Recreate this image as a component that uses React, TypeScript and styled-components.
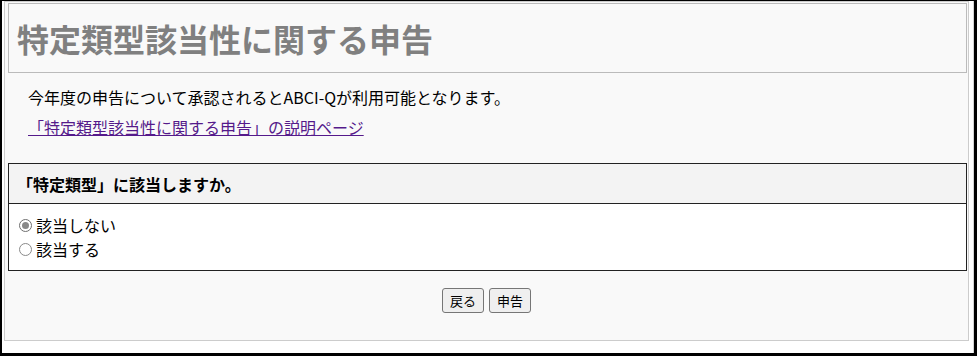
import { useState } from "react";
import styled, { createGlobalStyle } from "styled-components";

const GlobalStyle = createGlobalStyle`
  html, body {
    margin: 0;
    padding: 0;
    background: #ffffff;
  }
  body {
    font-family: "Noto Sans CJK JP", "Noto Sans", sans-serif;
    color: #000;
  }
`;

const Frame = styled.div`
  width: 977px;
  height: 356px;
  box-sizing: border-box;
  border-style: solid;
  border-color: #000;
  border-width: 1px 3px 3px 2px;
  background: #fff;
  overflow: hidden;
`;

const Page = styled.div`
  height: 100%;
  box-sizing: border-box;
  padding: 0 4px 12px 2px;
  border-right: 1px solid #d4d4d4;
`;

const Panel = styled.div`
  height: 100%;
  box-sizing: border-box;
  border: 1px solid #cccccc;
  background: #f9f9f9;
  padding: 1px 1px 0 3px;
  display: flex;
  flex-direction: column;
`;

const TitleBox = styled.div`
  height: 70px;
  box-sizing: border-box;
  border: 1px solid #bbbbbb;
  padding-left: 8px;
  display: flex;
  align-items: center;
`;

const Title = styled.h1`
  margin: 0;
  font-size: 32px;
  font-weight: bold;
  color: #808080;
  line-height: 1;
`;

const Intro = styled.div`
  padding: 12px 0 0 20px;
  display: flex;
  flex-direction: column;
  gap: 6px;
`;

const Text = styled.p`
  margin: 0;
  font-size: 16px;
  line-height: 24px;
`;

const Link = styled.a`
  font-size: 16px;
  line-height: 24px;
  color: #551a8b;
  text-decoration: underline;
  align-self: flex-start;
  cursor: pointer;
`;

const Question = styled.div`
  margin-top: 24px;
  border: 1px solid #222222;
  background: #ffffff;
`;

const QuestionHead = styled.div`
  height: 40px;
  box-sizing: border-box;
  background: #f3f3f3;
  border-bottom: 1px solid #222222;
  padding-left: 8px;
  display: flex;
  align-items: center;
  font-size: 16px;
  font-weight: bold;
`;

const QuestionBody = styled.div`
  padding: 9px 0 9px 10px;
  display: flex;
  flex-direction: column;
`;

const Option = styled.label`
  display: flex;
  align-items: center;
  height: 24px;
  font-size: 16px;
  cursor: pointer;
`;

const RadioMark = styled.span<{ $checked: boolean }>`
  width: 13px;
  height: 13px;
  box-sizing: border-box;
  border-radius: 50%;
  border: 1px solid ${({ $checked }) => ($checked ? "#6f6f6f" : "#8a8a8a")};
  background: #fff;
  margin-right: 4px;
  display: flex;
  align-items: center;
  justify-content: center;

  &::after {
    content: "";
    width: 7px;
    height: 7px;
    border-radius: 50%;
    background: ${({ $checked }) => ($checked ? "#888888" : "transparent")};
  }
`;

const Actions = styled.div`
  display: flex;
  justify-content: center;
  gap: 5px;
  margin-top: 17px;
  padding-right: 2px;
`;

const Button = styled.button`
  height: 25px;
  padding: 0 7px;
  font-family: "Noto Sans CJK JP", sans-serif;
  font-size: 13px;
  line-height: 1;
  color: #000;
  background: #efefef;
  border: 1px solid #767676;
  border-radius: 3px;
  cursor: pointer;
`;

const options = ["該当しない", "該当する"];

export default function App() {
  const [selected, setSelected] = useState(0);

  return (
    <>
      <GlobalStyle />
      <Frame>
        <Page>
          <Panel>
            <TitleBox>
              <Title>特定類型該当性に関する申告</Title>
            </TitleBox>
            <Intro>
              <Text>今年度の申告について承認されるとABCI-Qが利用可能となります。</Text>
              <Link>「特定類型該当性に関する申告」の説明ページ</Link>
            </Intro>
            <Question>
              <QuestionHead>「特定類型」に該当しますか。</QuestionHead>
              <QuestionBody>
                {options.map((label, i) => (
                  <Option key={label} onClick={() => setSelected(i)}>
                    <RadioMark $checked={selected === i} />
                    {label}
                  </Option>
                ))}
              </QuestionBody>
            </Question>
            <Actions>
              <Button>戻る</Button>
              <Button>申告</Button>
            </Actions>
          </Panel>
        </Page>
      </Frame>
    </>
  );
}
